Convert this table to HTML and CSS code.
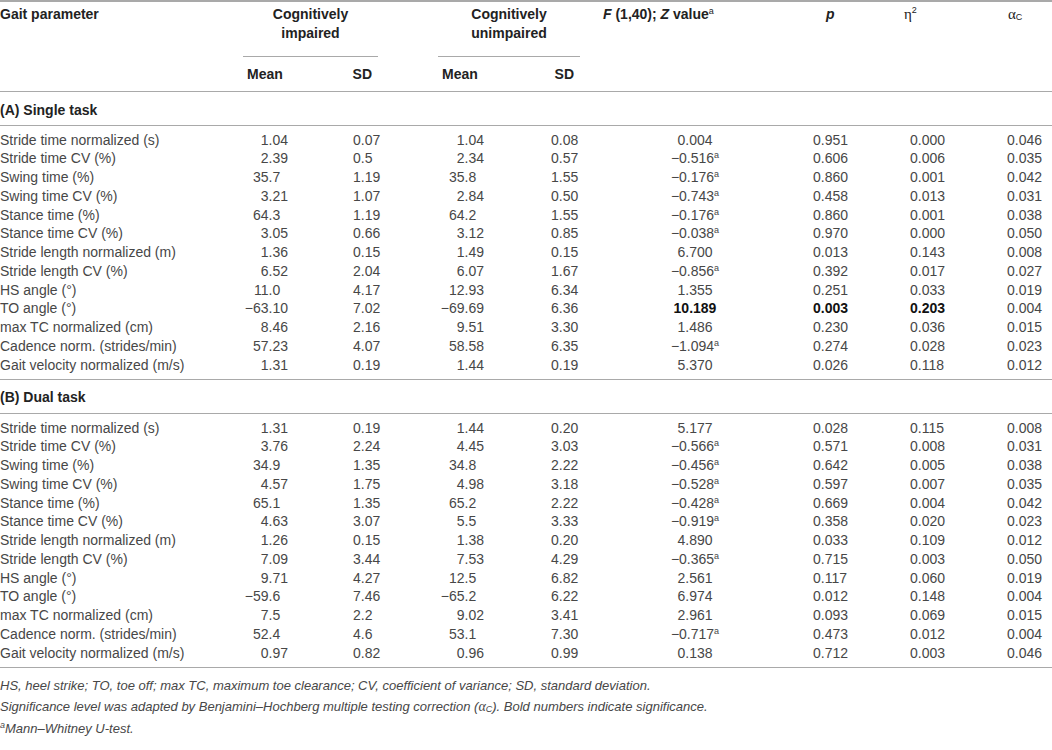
FILE: index.html
```html
<!DOCTYPE html>
<html lang="en">
<head>
<meta charset="utf-8">
<title>Gait parameters</title>
<link rel="stylesheet" href="styles.css">
</head>
<body>
<table class="gait">
  <colgroup>
    <col class="w-param"><col class="w-m1"><col class="w-s1"><col class="w-gap"><col class="w-m2"><col class="w-s2"><col class="w-f"><col class="w-p"><col class="w-eta"><col class="w-alpha">
  </colgroup>
  <thead>
    <tr class="h1">
      <th rowspan="2" class="h-param">Gait parameter</th>
      <th colspan="2" class="h-grp">Cognitively<br>impaired</th>
      <th rowspan="2"></th>
      <th colspan="2" class="h-grp">Cognitively<br>unimpaired</th>
      <th rowspan="2" class="h-f"><i>F</i> (1,40); <i>Z</i> value<span class="sup">a</span></th>
      <th rowspan="2" class="h-p"><i>p</i></th>
      <th rowspan="2" class="h-eta"><span class="greek">η</span><span class="sup2">2</span></th>
      <th rowspan="2" class="h-alpha"><span class="greek">α</span><span class="sub">C</span></th>
    </tr>
    <tr class="h2">
      <th class="h-mean">Mean</th><th class="h-sd">SD</th>
      <th class="h-mean">Mean</th><th class="h-sd">SD</th>
    </tr>
  </thead>
  <tbody class="sec"><tr><td colspan="10">(A) Single task</td></tr></tbody>
  <tbody class="data">
    <tr class="f"><td>Stride time normalized (s)</td><td>1.04</td><td>0.07</td><td></td><td>1.04</td><td>0.08</td><td>0.004</td><td>0.951</td><td>0.000</td><td>0.046</td></tr>
    <tr><td>Stride time CV (%)</td><td>2.39</td><td>0.5</td><td></td><td>2.34</td><td>0.57</td><td>−0.516<span class="sup">a</span></td><td>0.606</td><td>0.006</td><td>0.035</td></tr>
    <tr><td>Swing time (%)</td><td class="d1">35.7</td><td>1.19</td><td></td><td class="d1">35.8</td><td>1.55</td><td>−0.176<span class="sup">a</span></td><td>0.860</td><td>0.001</td><td>0.042</td></tr>
    <tr><td>Swing time CV (%)</td><td>3.21</td><td>1.07</td><td></td><td>2.84</td><td>0.50</td><td>−0.743<span class="sup">a</span></td><td>0.458</td><td>0.013</td><td>0.031</td></tr>
    <tr><td>Stance time (%)</td><td class="d1">64.3</td><td>1.19</td><td></td><td class="d1">64.2</td><td>1.55</td><td>−0.176<span class="sup">a</span></td><td>0.860</td><td>0.001</td><td>0.038</td></tr>
    <tr><td>Stance time CV (%)</td><td>3.05</td><td>0.66</td><td></td><td>3.12</td><td>0.85</td><td>−0.038<span class="sup">a</span></td><td>0.970</td><td>0.000</td><td>0.050</td></tr>
    <tr><td>Stride length normalized (m)</td><td>1.36</td><td>0.15</td><td></td><td>1.49</td><td>0.15</td><td>6.700</td><td>0.013</td><td>0.143</td><td>0.008</td></tr>
    <tr><td>Stride length CV (%)</td><td>6.52</td><td>2.04</td><td></td><td>6.07</td><td>1.67</td><td>−0.856<span class="sup">a</span></td><td>0.392</td><td>0.017</td><td>0.027</td></tr>
    <tr><td>HS angle (°)</td><td class="d1">11.0</td><td>4.17</td><td></td><td>12.93</td><td>6.34</td><td>1.355</td><td>0.251</td><td>0.033</td><td>0.019</td></tr>
    <tr><td>TO angle (°)</td><td>−63.10</td><td>7.02</td><td></td><td>−69.69</td><td>6.36</td><td><b>10.189</b></td><td><b>0.003</b></td><td><b>0.203</b></td><td>0.004</td></tr>
    <tr><td>max TC normalized (cm)</td><td>8.46</td><td>2.16</td><td></td><td>9.51</td><td>3.30</td><td>1.486</td><td>0.230</td><td>0.036</td><td>0.015</td></tr>
    <tr><td>Cadence norm. (strides/min)</td><td>57.23</td><td>4.07</td><td></td><td>58.58</td><td>6.35</td><td>−1.094<span class="sup">a</span></td><td>0.274</td><td>0.028</td><td>0.023</td></tr>
    <tr class="l"><td>Gait velocity normalized (m/s)</td><td>1.31</td><td>0.19</td><td></td><td>1.44</td><td>0.19</td><td>5.370</td><td>0.026</td><td>0.118</td><td>0.012</td></tr>
  </tbody>
  <tbody class="sec"><tr><td colspan="10">(B) Dual task</td></tr></tbody>
  <tbody class="data">
    <tr class="f"><td>Stride time normalized (s)</td><td>1.31</td><td>0.19</td><td></td><td>1.44</td><td>0.20</td><td>5.177</td><td>0.028</td><td>0.115</td><td>0.008</td></tr>
    <tr><td>Stride time CV (%)</td><td>3.76</td><td>2.24</td><td></td><td>4.45</td><td>3.03</td><td>−0.566<span class="sup">a</span></td><td>0.571</td><td>0.008</td><td>0.031</td></tr>
    <tr><td>Swing time (%)</td><td class="d1">34.9</td><td>1.35</td><td></td><td class="d1">34.8</td><td>2.22</td><td>−0.456<span class="sup">a</span></td><td>0.642</td><td>0.005</td><td>0.038</td></tr>
    <tr><td>Swing time CV (%)</td><td>4.57</td><td>1.75</td><td></td><td>4.98</td><td>3.18</td><td>−0.528<span class="sup">a</span></td><td>0.597</td><td>0.007</td><td>0.035</td></tr>
    <tr><td>Stance time (%)</td><td class="d1">65.1</td><td>1.35</td><td></td><td class="d1">65.2</td><td>2.22</td><td>−0.428<span class="sup">a</span></td><td>0.669</td><td>0.004</td><td>0.042</td></tr>
    <tr><td>Stance time CV (%)</td><td>4.63</td><td>3.07</td><td></td><td class="d1">5.5</td><td>3.33</td><td>−0.919<span class="sup">a</span></td><td>0.358</td><td>0.020</td><td>0.023</td></tr>
    <tr><td>Stride length normalized (m)</td><td>1.26</td><td>0.15</td><td></td><td>1.38</td><td>0.20</td><td>4.890</td><td>0.033</td><td>0.109</td><td>0.012</td></tr>
    <tr><td>Stride length CV (%)</td><td>7.09</td><td>3.44</td><td></td><td>7.53</td><td>4.29</td><td>−0.365<span class="sup">a</span></td><td>0.715</td><td>0.003</td><td>0.050</td></tr>
    <tr><td>HS angle (°)</td><td>9.71</td><td>4.27</td><td></td><td class="d1">12.5</td><td>6.82</td><td>2.561</td><td>0.117</td><td>0.060</td><td>0.019</td></tr>
    <tr><td>TO angle (°)</td><td class="d1">−59.6</td><td>7.46</td><td></td><td class="d1">−65.2</td><td>6.22</td><td>6.974</td><td>0.012</td><td>0.148</td><td>0.004</td></tr>
    <tr><td>max TC normalized (cm)</td><td class="d1">7.5</td><td>2.2</td><td></td><td>9.02</td><td>3.41</td><td>2.961</td><td>0.093</td><td>0.069</td><td>0.015</td></tr>
    <tr><td>Cadence norm. (strides/min)</td><td class="d1">52.4</td><td>4.6</td><td></td><td class="d1">53.1</td><td>7.30</td><td>−0.717<span class="sup">a</span></td><td>0.473</td><td>0.012</td><td>0.004</td></tr>
    <tr class="l"><td>Gait velocity normalized (m/s)</td><td>0.97</td><td>0.82</td><td></td><td>0.96</td><td>0.99</td><td>0.138</td><td>0.712</td><td>0.003</td><td>0.046</td></tr>
  </tbody>
</table>
<div class="notes">
  <p>HS, heel strike; TO, toe off; max TC, maximum toe clearance; CV, coefficient of variance; SD, standard deviation.</p>
  <p>Significance level was adapted by Benjamini–Hochberg multiple testing correction (<span class="greek">α</span><span class="sub">C</span>). Bold numbers indicate significance.</p>
  <p><span class="sup">a</span>Mann–Whitney U-test.</p>
</div>
</body>
</html>
```

FILE: styles.css
```css
body {
  margin: 0;
  background: #fff;
  font-family: "Liberation Sans", Arial, sans-serif;
  font-size: 14px;
  color: #474747;
}

.gait {
  width: 1052px;
  border-collapse: collapse;
  table-layout: fixed;
}

.w-param { width: 243px; }
.w-m1 { width: 75px; }
.w-s1 { width: 60px; }
.w-gap { width: 60px; }
.w-m2 { width: 72px; }
.w-s2 { width: 70px; }
.w-f { width: 180px; }
.w-p { width: 110px; }
.w-eta { width: 100px; }
.w-alpha { width: 82px; }

.gait thead {
  border-top: 2px solid #a9a9a9;
  border-bottom: 1px solid #a9a9a9;
}

.gait th {
  padding: 0;
  font-weight: bold;
  color: #222;
  text-align: left;
  vertical-align: top;
  line-height: 19px;
  white-space: nowrap;
}

.gait .h1 th { padding-top: 3px; }
.gait .h1 .h-grp {
  text-align: center;
  padding-bottom: 13px;
  border-bottom: 1px solid #a9a9a9;
}
.gait .h1 .h-f { padding-left: 23px; }
.gait .h1 .h-p { padding-left: 66px; }
.gait .h1 .h-eta { padding-left: 34px; }
.gait .h1 .h-alpha { padding-left: 38px; }

.gait .h2 th {
  padding-top: 8px;
  padding-bottom: 7px;
}
.gait .h2 .h-mean { padding-left: 4px; }
.gait .h2 .h-sd { text-align: right; padding-right: 6px; }

.greek {
  font-family: "Liberation Serif", "DejaVu Serif", serif;
  font-weight: normal;
  font-size: 15px;
}
.sup2 {
  font-size: 9px;
  font-weight: normal;
  vertical-align: 6px;
  line-height: 0;
}
.sub {
  font-size: 9px;
  font-weight: normal;
  vertical-align: -1px;
  line-height: 0;
}
.sup {
  font-size: 9px;
  font-weight: normal;
  vertical-align: 5px;
  line-height: 0;
}

.sec td {
  font-weight: bold;
  color: #222;
  line-height: 19px;
  padding: 8.5px 0 5.5px;
}
.gait tbody {
  border-bottom: 1px solid #a9a9a9;
}

.data td {
  padding: 0;
  line-height: 18.75px;
  white-space: nowrap;
}
.data .f td { padding-top: 4.6px; }
.data .l td { padding-bottom: 4.6px; }
.data b { color: #111; }

.data td:nth-child(2) { text-align: right; padding-right: 30px; }
.data td:nth-child(3) { padding-left: 35px; }
.data td:nth-child(5) { text-align: right; padding-right: 26px; }
.data td:nth-child(6) { padding-left: 41px; }
.data td:nth-child(7) { text-align: center; padding-left: 50px; }
.data td:nth-child(8) { padding-left: 53px; }
.data td:nth-child(9) { padding-left: 40px; }
.data td:nth-child(10) { padding-left: 37px; }

.d1::after {
  content: "";
  display: inline-block;
  width: 7.8px;
}

.notes {
  padding-top: 7px;
  font-size: 13px;
  font-style: italic;
  line-height: 21.5px;
}
.notes p { margin: 0; }
.notes .greek { font-size: 14px; font-style: italic; }
```
